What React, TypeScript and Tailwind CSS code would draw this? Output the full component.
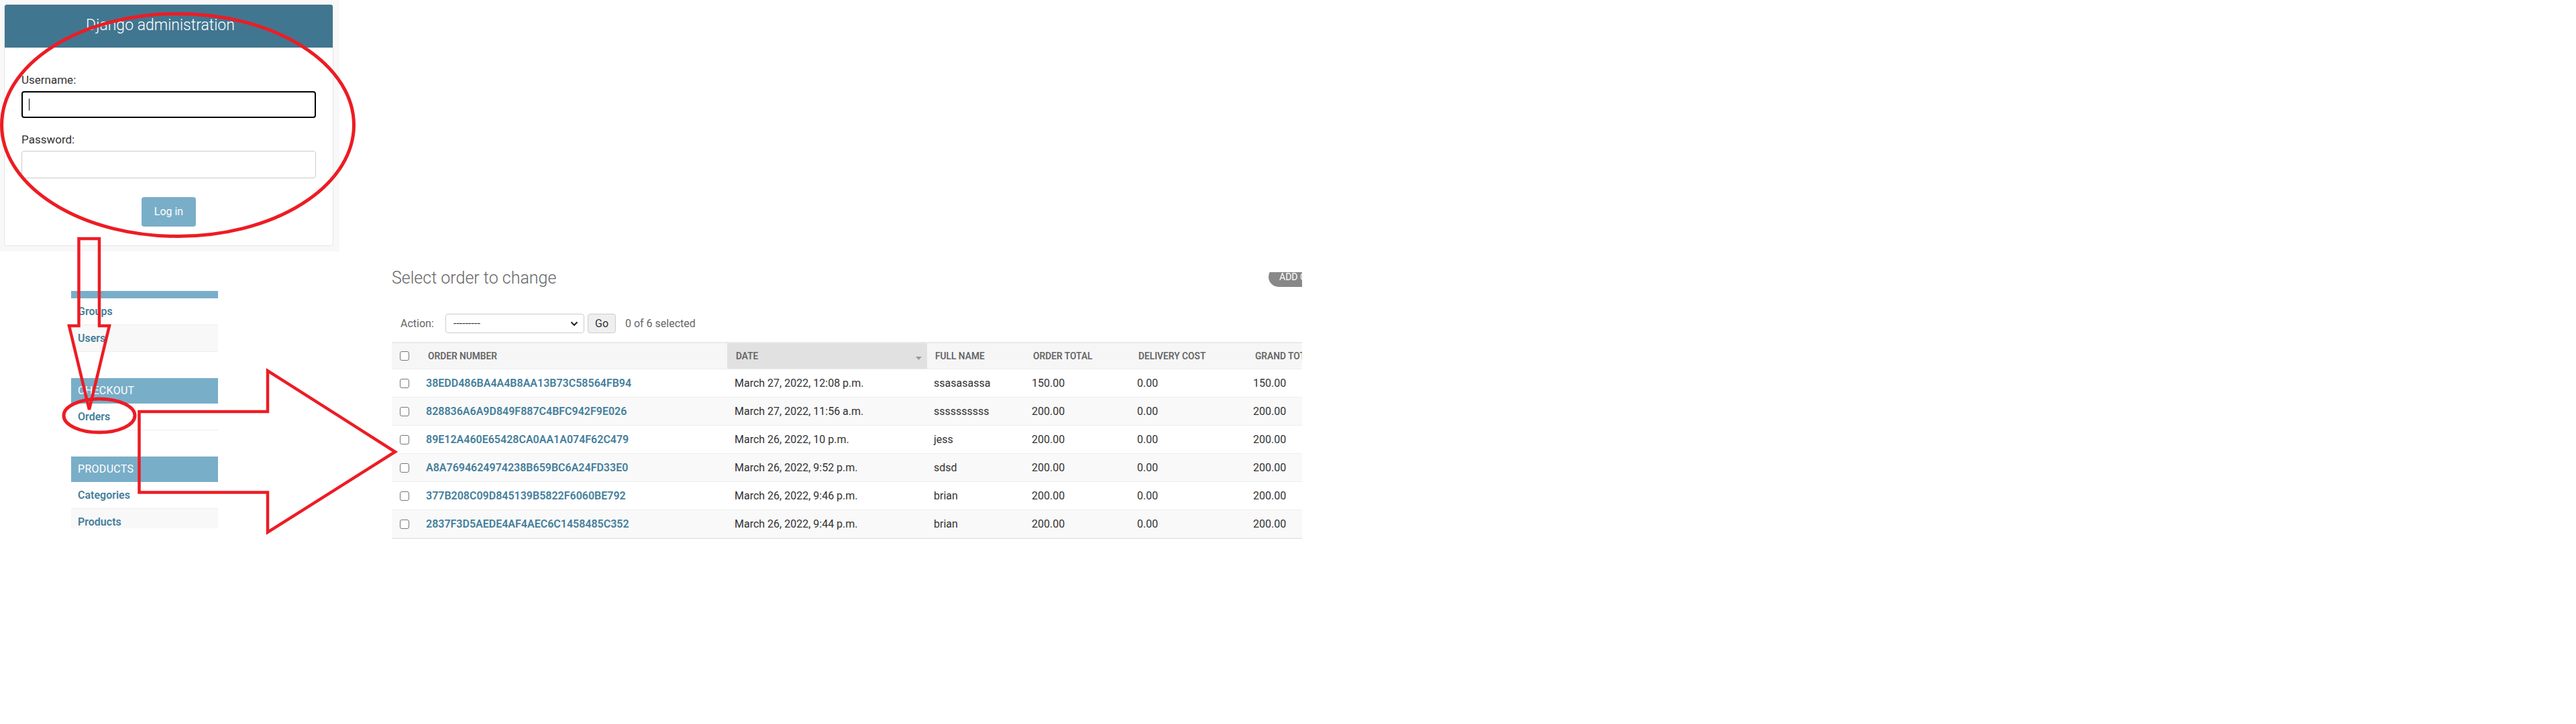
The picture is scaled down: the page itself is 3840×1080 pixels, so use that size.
import React from 'react'

const orders = [
    { num: "38EDD486BA4A4B8AA13B73C58564FB94", date: "March 27, 2022, 12:08 p.m.", name: "ssasasassa", total: "150.00", delivery: "0.00", grand: "150.00" },
    { num: "828836A6A9D849F887C4BFC942F9E026", date: "March 27, 2022, 11:56 a.m.", name: "ssssssssss", total: "200.00", delivery: "0.00", grand: "200.00" },
    { num: "89E12A460E65428CA0AA1A074F62C479", date: "March 26, 2022, 10 p.m.", name: "jess", total: "200.00", delivery: "0.00", grand: "200.00" },
    { num: "A8A7694624974238B659BC6A24FD33E0", date: "March 26, 2022, 9:52 p.m.", name: "sdsd", total: "200.00", delivery: "0.00", grand: "200.00" },
    { num: "377B208C09D845139B5822F6060BE792", date: "March 26, 2022, 9:46 p.m.", name: "brian", total: "200.00", delivery: "0.00", grand: "200.00" },
    { num: "2837F3D5AEDE4AF4AEC6C1458485C352", date: "March 26, 2022, 9:44 p.m.", name: "brian", total: "200.00", delivery: "0.00", grand: "200.00" },
]

function Checkbox() {
    return <div className="w-[14px] h-[14px] border border-[#767676] rounded-[3px] bg-white" />
}

function LoginPanel() {
    return (
        <div className="w-[506px] h-[375px] bg-[#f8f8f8] pt-[6px] pl-[6px]">
            <div className="w-[491px] h-[361px] bg-white border border-[#e6e6e6] rounded-[4px] overflow-hidden">
                <div className="h-[64px] bg-[#417690] flex items-center justify-center pr-[25px] pb-[3px]">
                    <h1 className="text-[23px] font-light text-white leading-none">Django administration</h1>
                </div>
                <div className="px-[25px] pt-[38px]">
                    <label className="block text-[17px] leading-[20px] text-[#333]">Username:</label>
                    <div className="mt-[7px] h-[40px] border-2 border-black rounded-[4px] flex items-center pl-[9px]">
                        <div className="w-[1px] h-[18px] bg-black" />
                    </div>
                    <label className="block mt-[22px] text-[17px] leading-[20px] text-[#333]">Password:</label>
                    <div className="mt-[7px] h-[41px] border border-[#ccc] rounded-[4px]" />
                    <div className="mt-[28px] mx-auto w-[81px] h-[44px] bg-[#79aec8] rounded-[4px] text-white text-[16px] flex items-center justify-center">
                        Log in
                    </div>
                </div>
            </div>
        </div>
    )
}

function SideRow({ label, alt }: { label: string; alt?: boolean }) {
    return (
        <div className={`h-[40px] border-b border-[#eee] flex items-center pl-[10px] font-semibold text-[#447e9b] ${alt ? 'bg-[#f8f8f8]' : 'bg-white'}`}>
            {label}
        </div>
    )
}

function Caption({ label }: { label: string }) {
    return (
        <div className="h-[38px] bg-[#79aec8] flex items-center pl-[10px] text-white tracking-[0.3px]">
            {label}
        </div>
    )
}

function Sidebar() {
    return (
        <div className="w-[219px] ml-[106px] mt-[59px] text-[16px]">
            <div className="h-[11px] bg-[#79aec8]" />
            <SideRow label="Groups" />
            <SideRow label="Users" alt />
            <div className="h-[39px]" />
            <Caption label="CHECKOUT" />
            <SideRow label="Orders" />
            <div className="h-[39px]" />
            <Caption label="PRODUCTS" />
            <SideRow label="Categories" />
            <div className="h-[29px] overflow-hidden">
                <div className="h-[40px] bg-[#f8f8f8] flex items-center pl-[10px] font-semibold text-[#447e9b]">Products</div>
            </div>
        </div>
    )
}

function OrderTable() {
    const cols = "grid grid-cols-[42px_458px_298px_146px_157px_173px_220px]"
    return (
        <div className="mt-[13px] border-t-2 border-[#eaeaea]">
            <div className={`${cols} h-[39px] border-b border-[#eee] bg-[#f6f6f6] text-[13.75px] font-semibold text-[#666]`}>
                <div className="flex items-center pl-[12px]"><Checkbox /></div>
                <div className="flex items-center pl-[12px]">ORDER NUMBER</div>
                <div className="flex items-center pl-[13px] pr-[8px] bg-[#e1e1e1]">
                    <span>DATE</span>
                    <svg className="ml-auto mt-[6px]" width="9" height="5" viewBox="0 0 9 5">
                        <path d="M0 0 L9 0 L4.5 5 Z" fill="#999" />
                    </svg>
                </div>
                <div className="flex items-center pl-[12px]">FULL NAME</div>
                <div className="flex items-center pl-[12px]">ORDER TOTAL</div>
                <div className="flex items-center pl-[12px]">DELIVERY COST</div>
                <div className="flex items-center pl-[13px] whitespace-nowrap">GRAND TOTAL</div>
            </div>
            {orders.map((o, i) => (
                <div key={o.num} className={`${cols} h-[42px] border-b border-[#eee] text-[16px] text-[#333] ${i % 2 === 1 ? 'bg-[#f9f9f9]' : 'bg-white'}`}>
                    <div className="flex items-center pl-[12px]"><Checkbox /></div>
                    <div className="flex items-center pl-[9px] font-semibold text-[#447e9b]">{o.num}</div>
                    <div className="flex items-center pl-[11px]">{o.date}</div>
                    <div className="flex items-center pl-[10px]">{o.name}</div>
                    <div className="flex items-center pl-[10px]">{o.total}</div>
                    <div className="flex items-center pl-[10px]">{o.delivery}</div>
                    <div className="flex items-center pl-[10px]">{o.grand}</div>
                </div>
            ))}
            <div className="h-[1px] bg-[#e4e4e4]" />
        </div>
    )
}

function ChangeList() {
    return (
        <div className="w-[1357px] ml-[259px] mt-[27px] overflow-hidden">
            <div className="flex items-start">
                <h1 className="text-[25px] leading-none font-light text-[#666] whitespace-nowrap">Select order to change</h1>
                {/* screenshot cuts the add button at top and right */}
                <div className="ml-auto mt-[4px] w-[50px] h-[22px] overflow-hidden">
                    <div className="-mt-[8px] w-[130px] h-[30px] rounded-[15px] bg-[#888] pl-[16px] text-white text-[14px] leading-[30px] whitespace-nowrap">
                        ADD ORDER +
                    </div>
                </div>
            </div>
            <div className="mt-[40px] h-[29px] flex items-center text-[16px]">
                <div className="w-[80px] pl-[13px] text-[#666]">Action:</div>
                <div className="w-[207px] h-[29px] border border-[#ccc] rounded-[4px] bg-white flex items-center pl-[11px] pr-[8px] text-[#333]">
                    <span>---------</span>
                    <svg className="ml-auto" width="12" height="8" viewBox="0 0 12 8">
                        <path d="M1.5 1.5 L6 6 L10.5 1.5" fill="none" stroke="#222" strokeWidth="2" />
                    </svg>
                </div>
                <div className="ml-[5px] w-[42px] h-[29px] border border-[#ccc] rounded-[4px] bg-[#efefef] flex items-center justify-center text-[#333]">
                    Go
                </div>
                <div className="ml-[14px] text-[#666]">0 of 6 selected</div>
            </div>
            <OrderTable />
        </div>
    )
}

function Annotations() {
    return (
        <svg className="absolute left-0 top-0 pointer-events-none" width="3840" height="1080" viewBox="0 0 3840 1080">
            <g fill="none" stroke="#ed1c24" strokeLinejoin="miter">
                <ellipse cx="265" cy="186.5" rx="262.5" ry="166" strokeWidth="5" />
                <ellipse cx="148" cy="620" rx="53" ry="25" strokeWidth="5" />
                <path d="M117.5 356 L148 356 L148 486 L163 486 L133 611 L103 486 L117.5 486 Z" strokeWidth="4.5" />
                <path d="M207.5 614 L399 614 L399 553 L589 674 L399 794 L399 734.5 L207.5 734.5 Z" strokeWidth="4.5" />
            </g>
        </svg>
    )
}

export default function App() {
    return (
        <div className="relative w-[3840px] h-[1080px] bg-white overflow-hidden font-['Roboto',sans-serif]">
            <LoginPanel />
            <div className="flex items-start">
                <Sidebar />
                <ChangeList />
            </div>
            <Annotations />
        </div>
    )
}
